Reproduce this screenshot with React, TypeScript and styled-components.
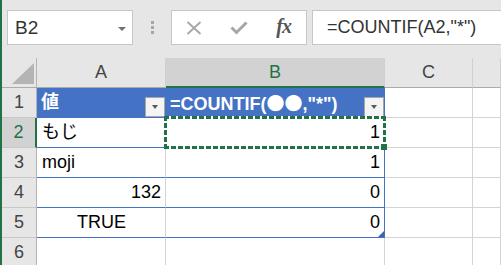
import styled, { createGlobalStyle } from "styled-components";

const GlobalStyle = createGlobalStyle`
  html, body {
    margin: 0;
    padding: 0;
    background: #fff;
  }
  body {
    font-family: "Liberation Sans", "Noto Sans CJK JP", sans-serif;
  }
  * {
    box-sizing: border-box;
  }
`;

const GREEN = "#217346";
const BLUE = "#4472c4";
const GRID = "#d4d4d4";

const Window = styled.div`
  width: 501px;
  height: 265px;
  overflow: hidden;
  border-left: 2px solid ${GREEN};
  background: #fff;
  display: flex;
  flex-direction: column;
`;

const FormulaBar = styled.div`
  height: 58px;
  flex: none;
  background: #e6e6e6;
  display: flex;
  align-items: flex-start;
  padding: 10px 0 0 5px;
`;

const NameBox = styled.div`
  width: 126px;
  height: 35px;
  flex: none;
  border: 1px solid #c6c6c6;
  background: #fff;
  display: flex;
  align-items: center;
  justify-content: space-between;
  padding: 0 6px 0 7px;
  font-size: 19px;
  color: #333;
`;

const DropArrow = styled.span`
  width: 0;
  height: 0;
  border-left: 4px solid transparent;
  border-right: 4px solid transparent;
  border-top: 4px solid #707070;
  margin-top: 2px;
`;

const Grip = styled.div`
  width: 3px;
  height: 13px;
  flex: none;
  margin: 11px 17px 0 18px;
  background: repeating-linear-gradient(180deg, #a6a6a6 0 3px, transparent 3px 5px);
`;

const ButtonBox = styled.div`
  width: 136px;
  height: 35px;
  flex: none;
  border: 1px solid #c6c6c6;
  background: #fff;
  display: flex;
`;

const BarButton = styled.div`
  flex: 1;
  display: flex;
  align-items: center;
  justify-content: center;
`;

const FxLabel = styled.span`
  font-family: "Liberation Serif", "DejaVu Serif", serif;
  font-style: italic;
  font-weight: bold;
  font-size: 20px;
  color: #555;
  letter-spacing: -1px;
  margin-top: -2px;
`;

const FormulaInput = styled.div`
  flex: 1;
  height: 35px;
  margin-left: 5px;
  border: 1px solid #c6c6c6;
  border-right: none;
  background: #fff;
  display: flex;
  align-items: center;
  padding-left: 14px;
  font-size: 18px;
  color: #333;
  white-space: nowrap;
`;

const Sheet = styled.div`
  flex: 1;
  overflow: hidden;
`;

const Row = styled.div`
  display: grid;
  grid-template-columns: 35px 129px 219px 88px 1fr;
  height: 30px;
`;

const HeaderBase = styled.div<{ $selected?: boolean }>`
  height: 30px;
  font-size: 18px;
  text-align: center;
  background: ${(p) => (p.$selected ? "#d2d2d2" : "#e6e6e6")};
  color: ${(p) => (p.$selected ? GREEN : "#444")};
`;

const ColHeader = styled(HeaderBase)`
  line-height: 28px;
  border-right: 1px solid #d0d0d0;
  border-bottom: ${(p) => (p.$selected ? `2px solid ${GREEN}` : "1px solid #ababab")};
`;

const RowHeader = styled(HeaderBase)`
  line-height: 29px;
  border-bottom: 1px solid #c8c8c8;
  border-right: ${(p) => (p.$selected ? `2px solid ${GREEN}` : "1px solid #b4b4b4")};
`;

const Corner = styled.div`
  height: 30px;
  background: #e6e6e6;
  border-right: 1px solid #b4b4b4;
  border-bottom: 1px solid #ababab;
  display: flex;
  justify-content: flex-end;
  align-items: flex-end;
  padding: 0 2px 3px 0;
`;

const Cell = styled.div<{
  $align?: "left" | "right" | "center";
  $right?: string;
  $bottom?: string;
}>`
  position: relative;
  height: 30px;
  line-height: 29px;
  font-size: 18px;
  padding: 0 4px 0 5px;
  text-align: ${(p) => p.$align ?? "left"};
  background: #fff;
  color: #000;
  white-space: nowrap;
  border-right: 1px solid ${(p) => p.$right ?? GRID};
  border-bottom: 1px solid ${(p) => p.$bottom ?? GRID};
`;

const TableHead = styled.div`
  height: 30px;
  display: flex;
  background: ${BLUE};
  color: #fff;
  font-size: 18px;
  font-weight: bold;
  padding-left: 4px;
  border-right: 1px solid ${BLUE};
  border-bottom: 1px solid ${BLUE};
  white-space: nowrap;
`;

const HeadLabel = styled.span`
  flex: 1;
  line-height: 29px;
  overflow: hidden;
`;

const WideGlyph = styled.span`
  font-family: "Noto Sans CJK JP", sans-serif;
  font-weight: normal;
`;

const FilterButton = styled.div`
  width: 20px;
  height: 20px;
  flex: none;
  align-self: flex-end;
  background: #f4f4f4;
  border: 1px solid #a6a6a6;
  display: flex;
  align-items: center;
  justify-content: center;

  &::after {
    content: "";
    width: 0;
    height: 0;
    border-left: 3.5px solid transparent;
    border-right: 3.5px solid transparent;
    border-top: 4px solid #595959;
  }
`;

const CopyMarquee = styled.div`
  position: absolute;
  inset: -2px;
  z-index: 2;
  pointer-events: none;
  background:
    repeating-linear-gradient(90deg, ${GREEN} 0 5px, #fff 5px 7px) top / 100% 3px no-repeat,
    repeating-linear-gradient(90deg, ${GREEN} 0 5px, #fff 5px 7px) bottom / 100% 3px no-repeat,
    repeating-linear-gradient(180deg, ${GREEN} 0 5px, #fff 5px 7px) left / 3px 100% no-repeat,
    repeating-linear-gradient(180deg, ${GREEN} 0 5px, #fff 5px 7px) right / 3px 100% no-repeat;
`;

const FillHandle = styled.div`
  position: absolute;
  right: -1px;
  bottom: -1px;
  width: 6px;
  height: 6px;
  background: ${GREEN};
`;

const ResizeHandle = styled.svg`
  position: absolute;
  right: 0;
  bottom: 0;
`;

const CloseIcon = () => (
  <svg width="16" height="14" viewBox="0 0 16 14">
    <path d="M1.5 1 L14.5 13 M14.5 1 L1.5 13" stroke="#a6a6a6" strokeWidth="1.8" fill="none" />
  </svg>
);

const CheckIcon = () => (
  <svg width="18" height="14" viewBox="0 0 18 14">
    <path d="M1.5 6.5 L6.5 11.5 L16.5 1.5" stroke="#a6a6a6" strokeWidth="3" fill="none" />
  </svg>
);

const cols = ["A", "B", "C", ""];

type DataRow = {
  n: number;
  a: string;
  aAlign: "left" | "right" | "center";
  b: string;
};

const data: DataRow[] = [
  { n: 2, a: "もじ", aAlign: "left", b: "1" },
  { n: 3, a: "moji", aAlign: "left", b: "1" },
  { n: 4, a: "132", aAlign: "right", b: "0" },
  { n: 5, a: "TRUE", aAlign: "center", b: "0" },
];

export default function App() {
  return (
    <>
      <GlobalStyle />
      <Window>
        <FormulaBar>
          <NameBox>
            <span>B2</span>
            <DropArrow />
          </NameBox>
          <Grip />
          <ButtonBox>
            <BarButton>
              <CloseIcon />
            </BarButton>
            <BarButton>
              <CheckIcon />
            </BarButton>
            <BarButton>
              <FxLabel>fx</FxLabel>
            </BarButton>
          </ButtonBox>
          <FormulaInput>=COUNTIF(A2,"*")</FormulaInput>
        </FormulaBar>

        <Sheet>
          <Row>
            <Corner>
              <svg width="22" height="21" viewBox="0 0 22 21">
                <polygon points="22,0 22,21 0,21" fill="#b4b4b4" />
              </svg>
            </Corner>
            {cols.map((c) => (
              <ColHeader key={c || "d"} $selected={c === "B"}>
                {c}
              </ColHeader>
            ))}
          </Row>

          <Row>
            <RowHeader>1</RowHeader>
            <TableHead>
              <HeadLabel>値</HeadLabel>
              <FilterButton />
            </TableHead>
            <TableHead>
              <HeadLabel>
                =COUNTIF(<WideGlyph>●●</WideGlyph>,"*")
              </HeadLabel>
              <FilterButton />
            </TableHead>
            <Cell />
            <Cell />
          </Row>

          {data.map((r, i) => (
            <Row key={r.n}>
              <RowHeader $selected={r.n === 2}>{r.n}</RowHeader>
              <Cell $align={r.aAlign} $bottom={BLUE}>
                {r.a}
              </Cell>
              <Cell $align="right" $right={BLUE} $bottom={BLUE}>
                {r.b}
                {r.n === 2 && (
                  <CopyMarquee>
                    <FillHandle />
                  </CopyMarquee>
                )}
                {i === data.length - 1 && (
                  <ResizeHandle width="6" height="6" viewBox="0 0 6 6">
                    <polygon points="6,0 6,6 0,6" fill="#3f62b0" />
                  </ResizeHandle>
                )}
              </Cell>
              <Cell />
              <Cell />
            </Row>
          ))}

          <Row>
            <RowHeader>6</RowHeader>
            <Cell />
            <Cell />
            <Cell />
            <Cell />
          </Row>
        </Sheet>
      </Window>
    </>
  );
}
